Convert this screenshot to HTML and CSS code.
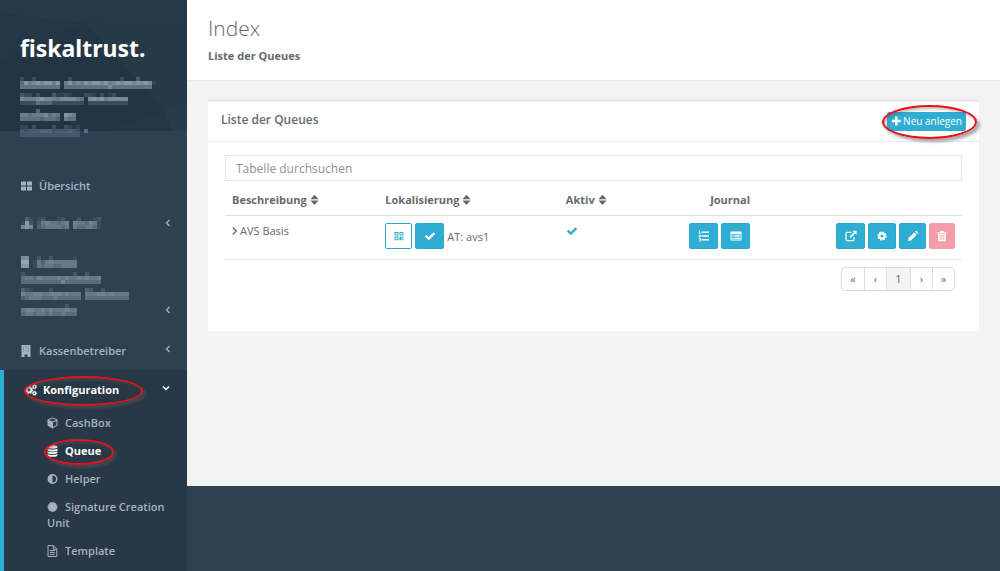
FILE: index.html
```html
<!DOCTYPE html>
<html lang="de">
<head>
<meta charset="utf-8">
<title>fiskaltrust – Liste der Queues</title>
<link rel="stylesheet" href="styles.css">
</head>
<body>
<svg class="sprite" aria-hidden="true">
  <symbol id="i-grid" viewBox="0 0 12 12"><path d="M0 1.500h5v4H0zM6 1.500h5v4H6zM0 6.500h5v4H0zM6 6.500h5v4H6z"/></symbol>
  <symbol id="i-building" viewBox="0 0 12 12"><path d="M.5 0h9v12H6.500V9.500h-3V12h-3z"/><path fill="#2f4050" opacity=".45" d="M2 1.500h1v1H2zM4.500 1.500h1v1h-1zM7 1.500h1v1H7zM2 3.500h1v1H2zM4.500 3.500h1v1h-1zM7 3.500h1v1H7zM2 5.500h1v1H2zM4.500 5.500h1v1h-1zM7 5.500h1v1H7z"/></symbol>
  <symbol id="i-cogs" viewBox="0 0 12 12"><g fill="none" stroke="currentColor"><circle cx="4" cy="6" r="2.300" stroke-width="1.800"/><circle cx="4" cy="6" r="3.500" stroke-width="1.200" stroke-dasharray="1.400 1.350"/><circle cx="9.500" cy="2.800" r="1.400" stroke-width="1.300"/><circle cx="9.500" cy="9.200" r="1.400" stroke-width="1.300"/><circle cx="9.500" cy="2.800" r="2.100" stroke-width=".7" stroke-dasharray="1 .65"/><circle cx="9.500" cy="9.200" r="2.100" stroke-width=".7" stroke-dasharray="1 .65"/></g></symbol>
  <symbol id="i-cube" viewBox="0 0 12 12"><path fill-rule="evenodd" d="M5.500.5l5 2v6l-5 3-5-3v-6zM1.700 3l3.800 1.500L9.300 3 5.500 1.600zM6 5.400v4.700l3.500-2V4z"/></symbol>
  <symbol id="i-db" viewBox="0 0 12 12"><path d="M.5 2C.5-.2 10.500-.2 10.500 2S.5 4.200.5 2zM.5 3.600c2 1.400 8 1.400 10 0v1.300c0 2-10 2-10 0zM.5 6.300c2 1.400 8 1.400 10 0v1.300c0 2-10 2-10 0zM.5 9c2 1.400 8 1.400 10 0v1.200c0 2.200-10 2.200-10 0z"/></symbol>
  <symbol id="i-half" viewBox="0 0 12 12"><path fill-rule="evenodd" d="M5.500 1a5 5 0 1 0 0 10 5 5 0 0 0 0-10zm0 1.500v7a3.500 3.500 0 0 1 0-7z" transform="matrix(-1 0 0 1 11 0)"/></symbol>
  <symbol id="i-seal" viewBox="0 0 12 12"><circle cx="5.500" cy="6" r="4.500"/><circle cx="5.500" cy="6" r="4.600" fill="none" stroke="currentColor" stroke-width=".9" stroke-dasharray="1.400 .95"/></symbol>
  <symbol id="i-file" viewBox="0 0 12 12"><path fill="none" stroke="currentColor" d="M1 .6h5.500L9.800 4v7.500H1zM6.300.8v3.500h3.400M2.800 5.500h5M2.800 7.400h5M2.800 9.300h5"/></symbol>
  <symbol id="i-left" viewBox="0 0 12 12"><path fill="none" stroke="currentColor" stroke-width="1.300" d="M7.500 3L4.500 6l3 3"/></symbol>
  <symbol id="i-right" viewBox="0 0 6 12"><path fill="none" stroke="currentColor" stroke-width="1.300" d="M.8 2.500L4.300 6 .8 9.500"/></symbol>
  <symbol id="i-down" viewBox="0 0 12 12"><path fill="none" stroke="currentColor" stroke-width="1.500" d="M3 4.500l3 3 3-3"/></symbol>
  <symbol id="i-sort" viewBox="0 0 12 12"><path d="M.5 5.200L4 1.300h1l3.500 3.900zM.5 6.600L4 10.500h1l3.500-3.900z"/></symbol>
  <symbol id="i-check" viewBox="0 0 12 12"><path d="M.8 6.400l1.700-1.700 2.300 2.200L9.500 2.200l1.700 1.700-6.400 6.300z"/></symbol>
  <symbol id="i-plus" viewBox="0 0 12 12"><path d="M4 1.500h2.500v3.200h3.200v2.500H6.500v3.300H4V7.200H.7V4.700H4z"/></symbol>
  <symbol id="i-qr" viewBox="0 0 12 12"><path fill-rule="evenodd" d="M1.500 2h4v3.600h-4zm1 1v1.600h2V3zM6.500 2h4v3.600h-4zm1 1v1.600h2V3zM1.500 6.600h4v3.600h-4zm1 1v1.600h2V7.600zM6.500 6.600h2v1.200h1V6.600h1v2h-2v1.600h-2zM9.300 9.300h1.200v.9H9.300z"/></symbol>
  <symbol id="i-list" viewBox="0 0 12 12"><path d="M3.500 1.500h7.500v1.600H3.500zM3.500 5.200h7.500v1.600H3.500zM3.500 8.900h7.500v1.600H3.500zM1.200.5h1v3h.6v.7H.8v-.7h.5V1.500H.8zM.8 4.900h2v1.400l-1 .7h1v.6h-2v-1l1.200-1H.8zM.8 8.300h2v3.200h-2v-.6h1.100v-.7H1v-.6h.9V9H.8z"/></symbol>
  <symbol id="i-table" viewBox="0 0 12 12"><path fill-rule="evenodd" d="M1.200 1.500h9.600l.7.700v7.600l-.7.700H1.200l-.7-.7V2.200zM1.500 4v5.500h9V4zM2.300 4.700h1.400v1H2.300zm2.200 0h5.200v1H4.500zM2.300 6.300h1.400v1H2.300zm2.200 0h5.200v1H4.500zM2.300 7.900h1.400v1H2.300zm2.200 0h5.200v1H4.500z"/></symbol>
  <symbol id="i-ext" viewBox="0 0 12 12"><path fill="none" stroke="currentColor" stroke-width="1.200" d="M6.500 2.300H2.200Q1 2.300 1 3.500v6q0 1.200 1.200 1.200h5.600Q9 10.700 9 9.500V7.300"/><path d="M7.400.7h4.200v4.200l-1.400-1.400-4.400 4.400-1.300-1.300 4.400-4.400z"/></symbol>
  <symbol id="i-cog" viewBox="0 0 12 12"><circle cx="6" cy="6" r="2.600" fill="none" stroke="currentColor" stroke-width="2.200"/><circle cx="6" cy="6" r="4" fill="none" stroke="currentColor" stroke-width="1.300" stroke-dasharray="1.800 1.342"/></symbol>
  <symbol id="i-pen" viewBox="0 0 12 12"><path d="M1 11l.6-3 5.600-5.600 2.400 2.400L4 10.400zM7.900 1.700l.8-.7q.5-.3 1 0L11 2.300q.3.500 0 1l-.7.800z"/></symbol>
  <symbol id="i-trash" viewBox="0 0 12 12"><path fill-rule="evenodd" d="M1.500 2.300h2.700V1h3.600v1.300h2.700v1.200h-9zM2 4h8v6.300l-.8.900H2.800l-.8-.9zM3.700 5v5h.8V5zm1.900 0v5h.8V5zm1.900 0v5h.8V5z"/></symbol>
</svg>

<div class="app">
  <aside class="sidebar">
    <header class="brand">
      <svg class="facets" viewBox="0 0 187 131" preserveAspectRatio="none" aria-hidden="true">
        <path fill="#273a48" d="M0 0h103L85 23 0 13z"/>
        <path fill="#273a49" d="M103 0h84v25L85 23z"/>
        <path fill="#263947" d="M85 23l102 2v75l-22 10z"/>
        <path fill="#213443" d="M0 60l85-37 80 87-55 21H0z" opacity=".5"/>
        <path fill="#293b49" d="M165 110l22-12v33h-15z"/>
      </svg>
      <div class="brand-body">
        <div class="logo">fiskaltrust.</div>
        <div class="redacted">
          <svg data-rows="2002000000002000000000000200030000|5867878868068676878878678788787871|5555555555055555555555755555555550"></svg>
          <svg data-rows="3220200031121000221020120000|7666787766777765078786777770|2222544422222222022222222220"></svg>
          <svg data-rows="00004000000000|66566675650876|55555455540655"></svg>
          <svg class="dim" data-rows="220300003003202000|434445553444543060|333333333333333000"></svg>
        </div>
      </div>
    </header>
    <nav>
      <ul class="menu">
        <li><a href="#"><span><svg class="icon"><use href="#i-grid"/></svg>Übersicht</span></a></li>
        <li><a href="#" aria-label="Benutzer"><span class="redacted"><svg data-rows="03101200012000200012|18202565545606554651|68603455554505445541"></svg></span><svg class="icon"><use href="#i-left"/></svg></a></li>
        <li><a href="#" aria-label="Unternehmen"><span class="redacted">
          <svg data-rows="7700200200000100|9901535655555500|8801545544555500"></svg>
          <svg data-rows="200000000000020020000|455465555656556565560|444444444464444444440"></svg>
          <svg data-rows="3210000200000000320020000000|6556655666565550555665655550|3455544454444440444444444440"></svg>
          <svg data-rows="00000000000200|56655656555655|45545545445444"></svg>
        </span><svg class="icon"><use href="#i-left"/></svg></a></li>
        <li><a href="#"><span><svg class="icon"><use href="#i-building"/></svg>Kassenbetreiber</span><svg class="icon"><use href="#i-left"/></svg></a></li>
        <li class="active">
          <a href="#"><span class="marked"><svg class="icon"><use href="#i-cogs"/></svg>Konfiguration<i class="ring ring-menu"></i></span><svg class="icon"><use href="#i-down"/></svg></a>
          <ul class="submenu">
            <li><a href="#"><svg class="icon"><use href="#i-cube"/></svg>CashBox</a></li>
            <li><a href="#" class="current"><span class="marked"><svg class="icon"><use href="#i-db"/></svg>Queue<i class="ring ring-sub"></i></span></a></li>
            <li><a href="#"><svg class="icon"><use href="#i-half"/></svg>Helper</a></li>
            <li><a href="#"><svg class="icon"><use href="#i-seal"/></svg>Signature Creation Unit</a></li>
            <li><a href="#"><svg class="icon"><use href="#i-file"/></svg>Template</a></li>
          </ul>
        </li>
      </ul>
    </nav>
  </aside>

  <main class="page">
    <header class="heading">
      <h1>Index</h1>
      <strong>Liste der Queues</strong>
    </header>
    <section class="panel">
      <header class="panel-title">
        <h2>Liste der Queues</h2>
        <span class="marked"><button class="add"><svg class="icon"><use href="#i-plus"/></svg>Neu anlegen</button><i class="ring ring-add"></i></span>
      </header>
      <div class="panel-body">
        <input class="search" type="text" placeholder="Tabelle durchsuchen" aria-label="Tabelle durchsuchen">
        <table>
          <thead>
            <tr>
              <th class="c-name">Beschreibung <svg class="icon"><use href="#i-sort"/></svg></th>
              <th class="c-loc">Lokalisierung <svg class="icon"><use href="#i-sort"/></svg></th>
              <th class="c-act">Aktiv <svg class="icon"><use href="#i-sort"/></svg></th>
              <th class="c-jour">Journal</th>
              <th></th>
            </tr>
          </thead>
          <tbody>
            <tr>
              <td><svg class="icon chev"><use href="#i-right"/></svg>AVS Basis</td>
              <td><div class="tools"><button class="btn outline" aria-label="QR-Code"><svg class="icon"><use href="#i-qr"/></svg></button><button class="btn wide" aria-label="Aktiv"><svg class="icon"><use href="#i-check"/></svg></button><span class="loc">AT: avs1</span></div></td>
              <td><svg class="icon tick"><use href="#i-check"/></svg></td>
              <td><div class="tools end"><button class="btn wide" aria-label="Journal"><svg class="icon"><use href="#i-list"/></svg></button><button class="btn wide" aria-label="Details"><svg class="icon"><use href="#i-table"/></svg></button></div></td>
              <td><div class="tools end"><button class="btn wide" aria-label="Öffnen"><svg class="icon"><use href="#i-ext"/></svg></button><button class="btn medium" aria-label="Einstellungen"><svg class="icon"><use href="#i-cog"/></svg></button><button class="btn" aria-label="Bearbeiten"><svg class="icon"><use href="#i-pen"/></svg></button><button class="btn danger" aria-label="Löschen"><svg class="icon"><use href="#i-trash"/></svg></button></div></td>
            </tr>
          </tbody>
        </table>
        <nav class="pager" aria-label="Seiten"><a href="#">«</a><a href="#">‹</a><a href="#" class="on">1</a><a href="#">›</a><a href="#">»</a></nav>
      </div>
    </section>
  </main>
</div>
<script src="mosaic.js"></script>
</body>
</html>
```
FILE: styles.css
```css
* { box-sizing: border-box; }
body {
  margin: 0;
  background: #2f4050;
  color: #676a6c;
  font: 11px/16px "Open Sans", sans-serif;
}
h1, h2, ul { margin: 0; padding: 0; list-style: none; }
a { color: inherit; text-decoration: none; }
button { font: inherit; cursor: pointer; }
.sprite { display: none; }
.icon { width: 12px; height: 12px; fill: currentColor; flex: none; vertical-align: -2px; }

.app { display: grid; grid-template-columns: 187px minmax(0, 1fr); align-items: start; min-height: 100vh; }
.sidebar { color: #a7b1c2; font-weight: 600; align-self: stretch; }

.brand { display: grid; height: 131px; background: #243746; }
.brand > * { grid-area: 1 / 1; min-width: 0; }
.facets { width: 100%; height: 131px; }
.brand-body { padding: 33px 20px 0; }
.logo { color: #fff; font: 700 23px/30px "Noto Sans", sans-serif; }
.redacted { display: flex; flex-direction: column; gap: 4px; fill: #a9b8ca; }
.redacted svg { display: block; height: 12px; }
.brand .redacted { padding-top: 14px; }
.dim { fill: #7b98b5; }

.menu { padding-top: 35px; }
.menu a { display: flex; justify-content: space-between; align-items: flex-end; padding: 12px 13px 11px 21px; }
.menu .redacted { padding-bottom: 4px; }
.menu a > span > .icon { margin-right: 6px; }
.menu a > .icon { margin-bottom: 4px; }
.active { background: #293846; border-left: 4px solid #2bafd6; }
.active > a { color: #fff; padding-right: 15px; }
.active > a, .submenu .current { font-weight: 700; }
.submenu { padding-bottom: 6px; }
.menu .submenu a { display: block; padding: 6px 15px 6px 43px; }
.menu .submenu .icon { margin: 0 6px 0 0; }
.submenu .current { color: #fff; }

.marked { position: relative; display: inline-block; }
.ring { position: absolute; border: 2px solid #e8101c; border-radius: 50%; box-shadow: 3px 3px 3px rgba(90, 90, 90, .5), inset 2px 2px 3px rgba(90, 90, 90, .4); pointer-events: none; }
.ring-menu { inset: -6px -24px -8px -1px; }
.ring-sub { inset: -4px -13px -6px -3px; }
.ring-add { inset: -7px -11px -8px -5px; }

.page { background: #f3f3f4; min-height: 486px; padding-bottom: 155px; }
.heading { background: #fff; border-bottom: 1px solid #e7eaec; padding: 15px 21px 16px; }
h1 { font-size: 21px; line-height: 26px; font-weight: 300; margin-bottom: 7px; }
.heading strong { display: block; font-size: 11px; }
.panel { background: #fff; border-top: 3px solid #e7eaec; margin: 18px 21px 0; min-height: 232px; }
.panel-title { display: flex; justify-content: space-between; align-items: flex-start; height: 40px; padding: 10px 13px 8px; border-bottom: 1px solid #e7eaec; }
h2 { font-size: 12px; line-height: 16px; font-weight: 600; }
.add { display: block; height: 19px; padding: 0 4px; border: 0; border-radius: 2px; background: #2fadd3; color: #fff; font-size: 10px; line-height: 19px; }
.panel-body { padding: 13px 17px; }
.search { display: block; width: 100%; height: 26px; padding: 0 10px; border: 1px solid #e5e6e7; font: 12px/16px "Open Sans", sans-serif; color: inherit; }
.search::placeholder { color: #8f9193; opacity: 1; }

table { width: 100%; border-collapse: collapse; table-layout: fixed; }
th { text-align: left; font-weight: 700; padding: 11px 7px 7px; border-bottom: 1px solid #ddd; white-space: nowrap; }
td { vertical-align: top; padding: 7px; height: 44px; border-bottom: 1px solid #e7eaec; }
.c-name { width: 20.8%; }
.c-loc { width: 24.5%; }
.c-act { width: 16.7%; }
.c-jour { width: 10.2%; text-align: right; }
.chev { width: 6px; margin-right: 2px; }
.tick { color: #2fadd3; }
.tools { display: flex; gap: 3px; white-space: nowrap; }
.end { justify-content: flex-end; }
.loc { padding-top: 6px; }
.btn { display: flex; align-items: center; justify-content: center; width: 27px; height: 26px; padding: 0; border: 1px solid #2aa8cf; border-radius: 2px; background: #2fadd3; color: #fff; flex: none; }
.wide { width: 29px; }
.medium { width: 28px; }
.outline { background: #fff; color: #2fadd3; }
.danger { width: 26px; background: #f59ca9; border-color: #f59ca9; }
.pager { display: flex; width: fit-content; margin: 7px 7px 0 auto; border: 1px solid #ddd; border-radius: 4px; }
.pager a { width: 22px; line-height: 22px; text-align: center; }
.pager a + a { border-left: 1px solid #ddd; }
.pager .on { width: 24px; background: #f4f4f4; }
```
FILE: mosaic.js
```javascript
// Draws hidden names as a grid of 4px blocks; each digit sets a block's opacity.
document.querySelectorAll('svg[data-rows]').forEach(svg => {
  const rows = svg.dataset.rows.split('|');
  const columns = Math.max(...rows.map(row => row.length));
  svg.setAttribute('viewBox', `0 0 ${columns * 4} 12`);
  svg.setAttribute('width', columns * 4);
  rows.forEach((row, y) => [...row].forEach((digit, x) => {
    const block = document.createElementNS('http://www.w3.org/2000/svg', 'rect');
    block.setAttribute('x', x * 4);
    block.setAttribute('y', y * 4);
    block.setAttribute('width', 4);
    block.setAttribute('height', 4);
    block.setAttribute('opacity', digit / 11);
    svg.append(block);
  }));
});
```
